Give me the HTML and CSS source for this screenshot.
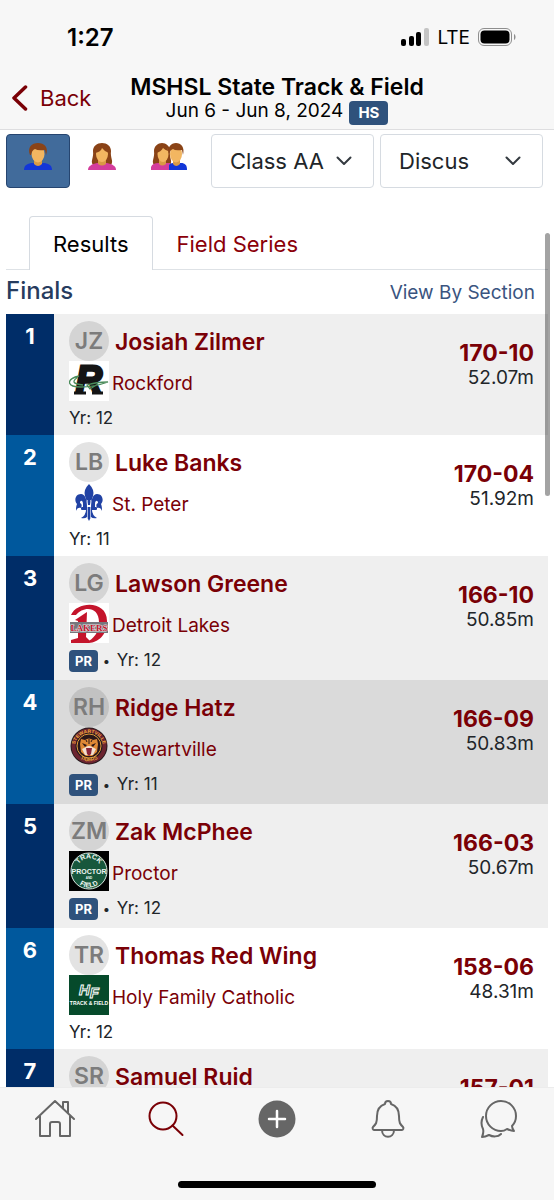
FILE: index.html
```html
<!DOCTYPE html>
<html lang="en">
<head>
    <meta charset="UTF-8">
    <meta name="viewport" content="width=device-width, initial-scale=1.0">
    <title>MSHSL State Track &amp; Field</title>
    <link rel="stylesheet" href="styles.css">
</head>
<body>

<div class="status-bar">
    <span class="time">1:27</span>
    <div class="signal">
        <svg width="28" height="18" viewBox="0 0 28 18">
            <rect x="0" y="11" width="5" height="7" rx="2"/>
            <rect x="8" y="8" width="5" height="10" rx="2"/>
            <rect x="15" y="4" width="5" height="14" rx="2"/>
            <rect x="23" y="0" width="5" height="18" rx="2" fill="#c4c4c4"/>
        </svg>
        <span>LTE</span>
        <svg width="38" height="18" viewBox="0 0 38 18">
            <rect x="0.5" y="0.5" width="33" height="17" rx="5.5" fill="none" stroke="#8e8e8e"/>
            <rect x="2.5" y="2.5" width="29" height="13" rx="4"/>
            <path d="M36 6v6c2-1 2-5 0-6z" fill="#8e8e8e"/>
        </svg>
    </div>
</div>

<header class="header">
    <a href="#" class="back">
        <svg width="16" height="26" viewBox="0 0 16 26"><path d="M13.500 2L2 13l11.500 11" fill="none" stroke="currentColor" stroke-width="3.500" stroke-linecap="round" stroke-linejoin="round"/></svg>
        Back
    </a>
    <div class="meet">
        <h1>MSHSL State Track &amp; Field</h1>
        <p class="date">Jun 6 - Jun 8, 2024 <span class="badge level">HS</span></p>
    </div>
</header>

<main class="content">
    <div class="filters">
        <div class="genders">
            <button type="button" class="gender active" aria-label="Men">
                <svg width="28" height="27" viewBox="0 0 28 27">
                    <path d="M0 27c0-5 4-7 9-7h10c5 0 9 2 9 7z" fill="#1236d8"/>
                    <path d="M10 17h8v4q-4 4-8 0z" fill="#d99a45"/>
                    <ellipse cx="14" cy="11" rx="6.500" ry="8.500" fill="#f2b661"/>
                    <path d="M6 12C3 4 8 0 14 0s11 4 8 12l-1-5q-7 1-10-1-3 1-4 6z" fill="#8a4317"/>
                </svg>
            </button>
            <button type="button" class="gender" aria-label="Women">
                <svg width="28" height="27" viewBox="0 0 28 27">
                    <path d="M5 22C2 18 6 15 5 8c0-5 4-8 9-8s9 3 9 8c-1 7 3 10 0 14z" fill="#8a4317"/>
                    <path d="M0 27c0-4 4-6 9-7h10c5 1 9 3 9 7z" fill="#d43d9c"/>
                    <path d="M10 17h8v4q-4 3-8 0z" fill="#d99a45"/>
                    <ellipse cx="14" cy="11" rx="6" ry="8" fill="#f2b661"/>
                    <path d="M7 10q0-9 7-9t7 9q-5-2-7-5-1 4-7 5z" fill="#8a4317"/>
                </svg>
            </button>
            <button type="button" class="gender both" aria-label="Men and women">
                <svg width="36" height="27" viewBox="0 0 36 27">
                    <path d="M3 22C0 18 4 15 3 8c0-5 4-8 8-8s8 3 8 8c-1 7 3 10 0 14z" fill="#8a4317"/>
                    <path d="M0 27v-3c1-3 4-4 7-4h12v7z" fill="#d43d9c"/>
                    <path d="M8 17h7v4q-4 3-7 0z" fill="#d99a45"/>
                    <ellipse cx="12" cy="11" rx="5.500" ry="8" fill="#f2b661"/>
                    <path d="M5 10q0-8 6-8t6 6q-3-1-5-3-2 4-7 5z" fill="#8a4317"/>
                    <path d="M18 27v-5q1-2 4-2h8c4 0 6 2 6 7z" fill="#1236d8"/>
                    <path d="M22 17h7v4q-4 4-7 0z" fill="#d99a45"/>
                    <ellipse cx="25" cy="11" rx="6" ry="8.500" fill="#f2b661"/>
                    <path d="M18 11C16 4 20 0 25 0s9 4 7 12l-1-5q-7 1-9-1-3 1-4 5z" fill="#8a4317"/>
                </svg>
            </button>
        </div>
        <div class="select-box">
            <select aria-label="Division"><option>Class AA</option></select>
            <svg class="chevron" width="16" height="10" viewBox="0 0 16 10"><path d="M1.500 1.500L8 8l6.500-6.500"/></svg>
        </div>
        <div class="select-box">
            <select aria-label="Event"><option>Discus</option></select>
            <svg class="chevron" width="16" height="10" viewBox="0 0 16 10"><path d="M1.500 1.500L8 8l6.500-6.500"/></svg>
        </div>
    </div>

    <nav class="tabs">
        <a href="#" class="tab active">Results</a>
        <a href="#" class="tab">Field Series</a>
    </nav>

    <div class="round">
        <h2>Finals</h2>
        <a href="#">View By Section</a>
    </div>

    <table class="results">
        <tbody>
            <tr>
                <td class="place">1</td>
                <td class="athlete">
                    <div class="line"><span class="avatar">JZ</span><a href="#" class="name">Josiah Zilmer</a></div>
                    <div class="line">
                        <svg class="logo" viewBox="0 0 40 40">
                            <rect width="40" height="40" fill="#fff"/>
                            <text x="7" y="31" font-family="Liberation Sans, sans-serif" font-size="36" font-weight="700" font-style="italic" fill="#151515" stroke="#151515" stroke-width="3">R</text>
                            <path d="M5 32h12M23 32h11M13 6h8" stroke="#151515" stroke-width="3"/>
                            <path d="M10 15C-3 18-3 26 12 26q13 0 27-5-12 0-21 3l3 4 8-5M9 16C3 20 3 23 14 24" fill="none" stroke="#4b8c5b" stroke-width="1.300"/>
                        </svg>
                        <a href="#" class="school">Rockford</a>
                    </div>
                    <div class="meta">Yr: 12</div>
                </td>
                <td class="mark"><a href="#">170-10</a><span>52.07m</span></td>
            </tr>
            <tr>
                <td class="place">2</td>
                <td class="athlete">
                    <div class="line"><span class="avatar">LB</span><a href="#" class="name">Luke Banks</a></div>
                    <div class="line">
                        <svg class="logo" viewBox="0 0 40 40">
                            <g fill="#2142a4">
                                <path d="M20 2q-6 6-4 12l3 9h2l3-9q2-6-4-12z"/>
                                <path d="M18 26C18 17 16 12 12 12c-6 0-7 7-4 10-1 2-1 5-1 7 1-3 3-4 5-3 1-2 1-4-1-5 0-3 3-3 3 1v5h4z"/>
                                <path d="M22 26c0-9 2-14 6-14 6 0 7 7 4 10 1 2 1 5 1 7-1-3-3-4-5-3-1-2-1-4 1-5 0-3-3-3-3 1v5h-4z"/>
                                <rect x="12" y="25" width="16" height="3" rx="1"/>
                                <path d="M17 28q0 5-5 8 4 1 6-1l2 4 2-4q2 2 6 1-5-3-5-8z"/>
                            </g>
                            <path d="M18.500 18v18M21.500 18v18" stroke="#fff" stroke-width="0.600"/>
                        </svg>
                        <a href="#" class="school">St. Peter</a>
                    </div>
                    <div class="meta">Yr: 11</div>
                </td>
                <td class="mark"><a href="#">170-04</a><span>51.92m</span></td>
            </tr>
            <tr>
                <td class="place">3</td>
                <td class="athlete">
                    <div class="line"><span class="avatar">LG</span><a href="#" class="name">Lawson Greene</a></div>
                    <div class="line">
                        <svg class="logo" viewBox="0 0 40 40">
                            <rect width="40" height="40" fill="#fff"/>
                            <path d="M2 12C8-2 38-3 38 18c0 15-9 21-18 22h-3c8-5 13-10 13-21C30 3 14 3 7 12z" fill="#c4142b"/>
                            <path d="M6 17l12-8-1 25 4 4-2 2H2v-3l7-2V18z" fill="#c4142b"/>
                            <rect x="1" y="19" width="38" height="11" fill="#77777d"/>
                            <text x="20" y="28" text-anchor="middle" font-family="Liberation Serif, serif" font-size="9" font-weight="700" fill="#c4142b" stroke="#e4e0e2" stroke-width="1" paint-order="stroke">LAKERS</text>
                        </svg>
                        <a href="#" class="school">Detroit Lakes</a>
                    </div>
                    <div class="meta"><span class="badge pr">PR</span> <span class="dot">•</span> Yr: 12</div>
                </td>
                <td class="mark"><a href="#">166-10</a><span>50.85m</span></td>
            </tr>
            <tr class="selected">
                <td class="place">4</td>
                <td class="athlete">
                    <div class="line"><span class="avatar">RH</span><a href="#" class="name">Ridge Hatz</a></div>
                    <div class="line">
                        <svg class="logo" viewBox="0 0 40 40">
                            <circle cx="20" cy="19" r="18.500" fill="#241a1d"/>
                            <circle cx="20" cy="19" r="15.500" fill="none" stroke="#6c2430" stroke-width="4"/>
                            <circle cx="20" cy="19" r="12" fill="#2a1719" stroke="#e29a3c" stroke-width="1"/>
                            <path id="stewart-top" d="M6 20a14 14 0 0 1 28 0" fill="none"/>
                            <path id="stewart-bottom" d="M6 26a16 16 0 0 0 28 0" fill="none"/>
                            <g font-family="Liberation Sans, sans-serif" font-size="5" font-weight="700" fill="#efa63d" text-anchor="middle">
                                <text><textPath href="#stewart-top" startOffset="50%">STEWARTVILLE</textPath></text>
                                <text><textPath href="#stewart-bottom" startOffset="50%">TIGERS</textPath></text>
                            </g>
                            <path d="M12 12l4 1q4-3 8 0l4-1 1 5-1 8-5 4h-6l-5-4-1-8z" fill="#df8936"/>
                            <path d="M13 16l5 2-2 2zM27 16l-5 2 2 2z" fill="#2a1719"/>
                            <path d="M13 22l6-3h2l6 3-3 6h-8z" fill="#f1dfcf"/>
                            <path d="M17 21h6l-1 6-2 2-2-2z" fill="#8c2338"/>
                            <path d="M20 12v5M17 13l1 2M23 13l-1 2" stroke="#2a1719"/>
                        </svg>
                        <a href="#" class="school">Stewartville</a>
                    </div>
                    <div class="meta"><span class="badge pr">PR</span> <span class="dot">•</span> Yr: 11</div>
                </td>
                <td class="mark"><a href="#">166-09</a><span>50.83m</span></td>
            </tr>
            <tr>
                <td class="place">5</td>
                <td class="athlete">
                    <div class="line"><span class="avatar">ZM</span><a href="#" class="name">Zak McPhee</a></div>
                    <div class="line">
                        <svg class="logo" viewBox="0 0 40 40">
                            <rect width="40" height="40"/>
                            <circle cx="20" cy="20" r="18" fill="#17573c" stroke="#d9e6df"/>
                            <path id="proctor-top" d="M8.500 16a12 12 0 0 1 23 0" fill="none"/>
                            <path id="proctor-bottom" d="M5 26a16 16 0 0 0 30 0" fill="none"/>
                            <g font-family="Liberation Sans, sans-serif" font-weight="700" fill="#eef5f1" text-anchor="middle">
                                <text font-size="7"><textPath href="#proctor-top" startOffset="50%">TRACK</textPath></text>
                                <text x="20" y="23" font-size="7">PROCTOR</text>
                                <text x="20" y="28" font-size="3">AND</text>
                                <text font-size="7"><textPath href="#proctor-bottom" startOffset="50%">FIELD</textPath></text>
                            </g>
                        </svg>
                        <a href="#" class="school">Proctor</a>
                    </div>
                    <div class="meta"><span class="badge pr">PR</span> <span class="dot">•</span> Yr: 12</div>
                </td>
                <td class="mark"><a href="#">166-03</a><span>50.67m</span></td>
            </tr>
            <tr>
                <td class="place">6</td>
                <td class="athlete">
                    <div class="line"><span class="avatar">TR</span><a href="#" class="name">Thomas Red Wing</a></div>
                    <div class="line">
                        <svg class="logo" viewBox="0 0 40 40">
                            <rect width="40" height="40" fill="#064a2b"/>
                            <g font-family="Liberation Sans, sans-serif" font-weight="700" text-anchor="middle">
                                <text x="20" y="20" font-size="15" font-style="italic" fill="#064a2b" stroke="#fff">H<tspan dy="3">F</tspan></text>
                                <text x="20" y="30" font-size="5" fill="#fff">TRACK &amp; FIELD</text>
                            </g>
                        </svg>
                        <a href="#" class="school">Holy Family Catholic</a>
                    </div>
                    <div class="meta">Yr: 12</div>
                </td>
                <td class="mark"><a href="#">158-06</a><span>48.31m</span></td>
            </tr>
            <tr>
                <td class="place">7</td>
                <td class="athlete">
                    <div class="line"><span class="avatar">SR</span><a href="#" class="name">Samuel Ruid</a></div>
                    <div class="line"></div>
                    <div class="meta"></div>
                </td>
                <td class="mark"><a href="#">157-01</a></td>
            </tr>
        </tbody>
    </table>
    <div class="scroll-thumb"></div>
</main>

<footer class="bottom-bar">
    <nav class="bottom-nav">
        <a href="#" aria-label="Home">
            <svg viewBox="0 0 40 40">
                <path d="M1 20L20 2l19 18M5 17v20h10V25q0-2 2-2h6q2 0 2 2v12h10V17M28 9V3h5v11"/>
            </svg>
        </a>
        <a href="#" class="current" aria-label="Search">
            <svg viewBox="0 0 40 40">
                <circle cx="17" cy="17" r="13.500"/>
                <path d="M26.500 26.500l10 9.500"/>
            </svg>
        </a>
        <a href="#" aria-label="Add">
            <svg viewBox="0 0 40 40">
                <circle cx="20" cy="20" r="18.500" fill="#666" stroke="none"/>
                <path d="M20 12v16M12 20h16" stroke="#fff" stroke-width="2.500"/>
            </svg>
        </a>
        <a href="#" aria-label="Notifications">
            <svg viewBox="0 0 40 40">
                <path d="M17 5q0-3 3-3t3 3c6 2 8 7 8 12 0 7 1 8 4 11 1 1 0 3-1 3H6c-1 0-2-2-1-3 3-3 4-4 4-11 0-5 2-10 8-12z"/>
                <path d="M14 31c0 9 12 9 12 0"/>
            </svg>
        </a>
        <a href="#" aria-label="Messages">
            <svg viewBox="0 0 40 40">
                <path d="M33 27C36 24 37 21 37 17A15 15 0 1 0 22 32q3 0 6-2 4 2 7 2-2-3-2-5z"/>
                <path d="M4 18c-3 6-1 10 0 12 1 3 0 5-1 8 3 0 5-1 7-2 4 2 9 2 12-1"/>
            </svg>
        </a>
    </nav>
    <div class="home-indicator"></div>
</footer>

</body>
</html>
```

FILE: styles.css
```css
* {
    box-sizing: border-box;
}
body {
    margin: 0;
    height: 100vh;
    display: flex;
    flex-direction: column;
    overflow: hidden;
    background: #fff;
    color: #212529;
    font-family: Inter, "Liberation Sans", sans-serif;
    font-size: 22px;
}
a {
    color: #7a0006;
    text-decoration: none;
}

/* phone status bar */
.status-bar {
    display: flex;
    flex-shrink: 0;
    justify-content: space-between;
    align-items: center;
    height: 74px;
    padding: 0 38px 0 67px;
    background: #f7f7f7;
    color: #000;
}
.time {
    font-size: 24px;
    font-weight: 600;
}
.signal {
    display: flex;
    align-items: center;
    gap: 8px;
    font-size: 19px;
}

.header {
    display: grid;
    grid-template-columns: 1fr auto 1fr;
    flex-shrink: 0;
    height: 56px;
    padding: 0 6px;
    background: #f7f7f7;
    border-bottom: 1px solid #dedee0;
}
.back {
    display: flex;
    align-items: center;
    gap: 12px;
    height: 48px;
    padding-left: 6px;
    font-size: 22px;
}
.meet {
    color: #000;
    text-align: center;
    white-space: nowrap;
}
.meet h1 {
    margin: 0;
    font-size: 23px;
    font-weight: 600;
    line-height: 26px;
}
.date {
    display: flex;
    justify-content: center;
    gap: 6px;
    margin: 0;
    font-size: 19px;
    line-height: 22px;
}
.badge {
    display: inline-block;
    background: #2f527c;
    border-radius: 4px;
    color: #fff;
    font-weight: 700;
}
.level {
    height: 24px;
    padding: 0 9px;
    margin-top: 1px;
    font-size: 15px;
    line-height: 24px;
}

.content {
    position: relative;
    flex: 1;
    min-height: 0;
    overflow: hidden;
    padding: 4px 6px 0;
}
.filters {
    display: flex;
    gap: 6px;
    padding-right: 5px;
}
.genders {
    display: flex;
    width: 199px;
}
.gender {
    width: 64px;
    height: 54px;
    padding: 0 0 10px;
    background: none;
    border: 1px solid transparent;
    border-radius: 4px;
}
.gender.both {
    width: 72px;
}
.gender.active {
    background: #416b9b;
    border-color: #264570;
}
.gender svg {
    display: block;
    margin: 0 auto;
}
.select-box {
    position: relative;
    flex: 1;
}
.select-box select {
    width: 100%;
    height: 54px;
    padding: 0 18px;
    appearance: none;
    background: #fff;
    border: 1px solid #d6dbe1;
    border-radius: 4px;
    color: #212529;
    font-family: inherit;
    font-size: 22px;
}
.chevron {
    position: absolute;
    top: 22px;
    right: 22px;
    fill: none;
    stroke: #343a40;
    stroke-width: 2;
    stroke-linecap: round;
    stroke-linejoin: round;
    pointer-events: none;
}

.tabs {
    display: flex;
    height: 54px;
    margin-top: 28px;
    padding-left: 23px;
    border-bottom: 1px solid #dee2e6;
}
.tab {
    height: 54px;
    padding: 0 23px;
    border: 1px solid transparent;
    line-height: 54px;
    color: #8b0009;
}
.tab.active {
    background: #fff;
    border-color: #d6dbe1;
    border-bottom: 0;
    border-radius: 4px 4px 0 0;
    color: #000;
}

.round {
    display: flex;
    justify-content: space-between;
    align-items: center;
    height: 44px;
    padding-right: 13px;
}
.round h2 {
    margin: 0;
    padding-bottom: 4px;
    color: #273c5e;
    font-size: 24px;
    font-weight: 500;
}
.round a {
    color: #3a547f;
    font-size: 19px;
}

.results {
    width: 100%;
    border-collapse: collapse;
}
.results td {
    padding: 0;
    vertical-align: top;
}
.results tr {
    background: #efefef;
}
.results tr:nth-child(2),
.results tr:nth-child(6) {
    background: #fff;
}
.results tr.selected {
    background: #dadada;
}
.results .place {
    width: 48px;
    padding-top: 8px;
    background: #002d68;
    color: #fff;
    font-size: 22px;
    font-weight: 700;
    line-height: 28px;
    text-align: center;
}
.results tr:nth-child(even) .place {
    background: #00589d;
}
.results .athlete {
    padding: 7px 0 0 15px;
}
.line {
    display: flex;
    align-items: center;
    height: 40px;
}
.avatar {
    width: 40px;
    height: 40px;
    margin-right: 6px;
    border-radius: 50%;
    background: rgba(0, 0, 0, 0.11);
    color: #7c7c7c;
    font-size: 23px;
    font-weight: 600;
    line-height: 41px;
    text-align: center;
}
.name {
    padding-top: 1px;
    font-size: 23px;
    font-weight: 600;
}
.logo {
    width: 40px;
    height: 40px;
    margin-right: 3px;
}
.school {
    padding-top: 5px;
    font-size: 19px;
}
.meta {
    height: 34px;
    font-size: 17px;
    line-height: 34px;
}
.meta:has(.pr) {
    height: 37px;
}
.pr {
    height: 22px;
    padding: 0 6px;
    font-size: 13px;
    line-height: 22px;
}
.dot {
    padding-right: 2px;
    font-size: 13px;
}
.results .mark {
    padding: 26px 14px 0 0;
    text-align: right;
}
.mark a,
.mark span {
    display: block;
}
.mark a {
    font-size: 23px;
    font-weight: 700;
    line-height: 26px;
}
.mark span {
    font-size: 19px;
    line-height: 24px;
}
.scroll-thumb {
    position: absolute;
    top: 103px;
    right: 4px;
    width: 5px;
    height: 263px;
    border-radius: 3px;
    background: rgba(0, 0, 0, 0.36);
}

.bottom-bar {
    flex-shrink: 0;
    height: 113px;
    padding-top: 11px;
    background: #f6f6f6;
    border-top: 1px solid #ececec;
}
.bottom-nav {
    display: grid;
    grid-template-columns: repeat(5, 1fr);
    justify-items: center;
}
.bottom-nav svg {
    display: block;
    width: 40px;
    height: 40px;
    fill: none;
    stroke: #666;
    stroke-width: 2;
    stroke-linecap: round;
    stroke-linejoin: round;
}
.bottom-nav .current svg {
    stroke: #7a0006;
}
.home-indicator {
    width: 198px;
    height: 7px;
    margin: 42px auto 0;
    border-radius: 4px;
    background: #000;
}
```
